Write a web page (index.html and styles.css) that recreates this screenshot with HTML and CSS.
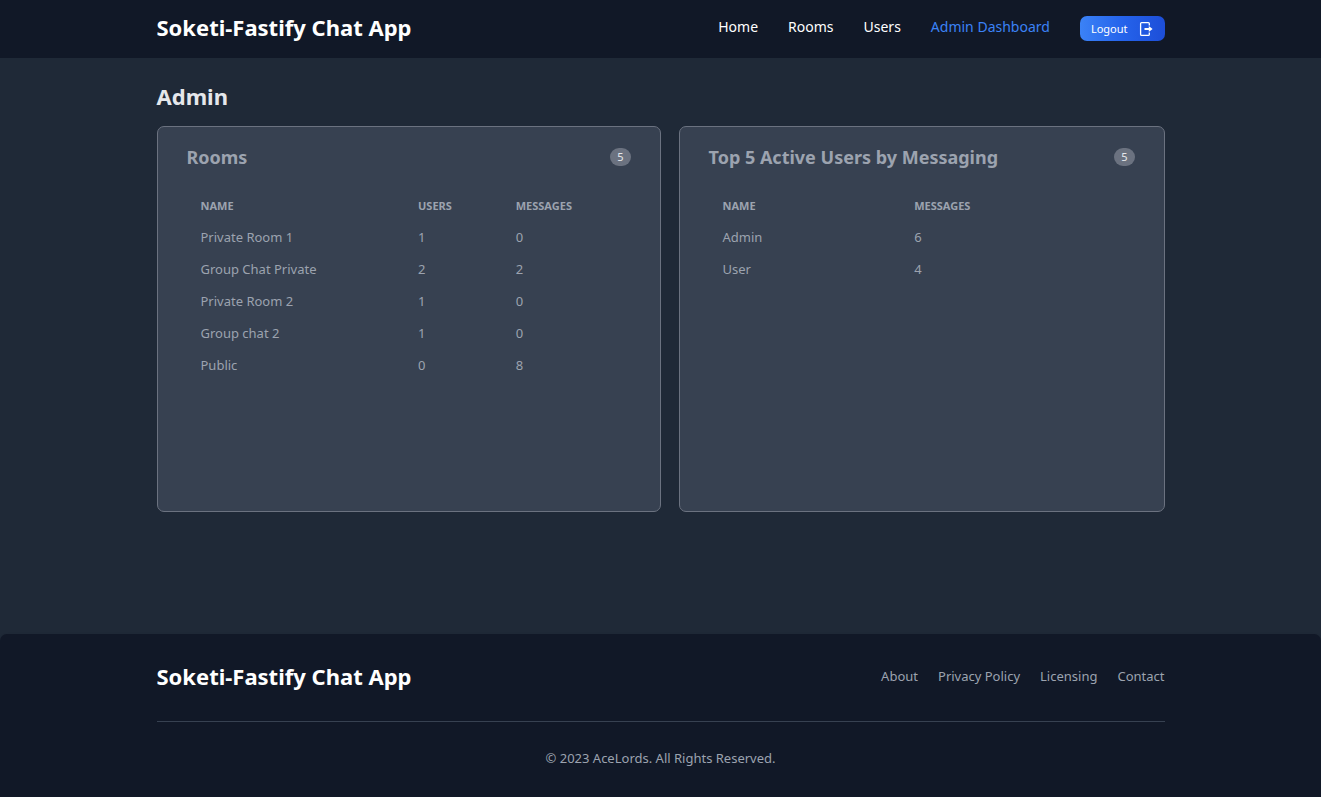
FILE: index.html
```html
<!DOCTYPE html>
<html lang="en">
<head>
<meta charset="utf-8">
<meta name="viewport" content="width=device-width, initial-scale=1">
<title>Soketi-Fastify Chat App</title>
<link rel="stylesheet" href="styles.css">
</head>
<body>
<div class="page">
  <header class="header">
    <div class="container header-row">
      <a class="brand" href="#">Soketi-Fastify Chat App</a>
      <nav>
        <ul class="nav">
          <li><a href="#">Home</a></li>
          <li><a href="#">Rooms</a></li>
          <li><a href="#">Users</a></li>
          <li><a class="active" href="#">Admin Dashboard</a></li>
          <li>
            <button class="logout" type="button">Logout
              <svg width="15" height="16" viewBox="0 0 15 16" fill="none" aria-hidden="true">
                <path d="M10.300 4.500V2.600Q10.300 1.600 9.300 1.600H2.600Q1.600 1.600 1.600 2.600V13.400Q1.600 14.400 2.600 14.400H9.300Q10.300 14.400 10.300 13.400V11.500" stroke="currentColor" stroke-width="1.300"/>
                <path d="M5.500 7H9.800V4.900L13.600 8L9.800 11.100V9H5.500Z" fill="currentColor"/>
              </svg>
            </button>
          </li>
        </ul>
      </nav>
    </div>
  </header>

  <main class="container main">
    <h1 class="title">Admin</h1>
    <div class="cards">
      <section class="card">
        <div class="card-head"><h2>Rooms</h2><span class="badge">5</span></div>
        <table class="table rooms">
          <thead><tr><th>Name</th><th>Users</th><th>Messages</th></tr></thead>
          <tbody>
            <tr><td>Private Room 1</td><td>1</td><td>0</td></tr>
            <tr><td>Group Chat Private</td><td>2</td><td>2</td></tr>
            <tr><td>Private Room 2</td><td>1</td><td>0</td></tr>
            <tr><td>Group chat 2</td><td>1</td><td>0</td></tr>
            <tr><td>Public</td><td>0</td><td>8</td></tr>
          </tbody>
        </table>
      </section>
      <section class="card">
        <div class="card-head"><h2>Top 5 Active Users by Messaging</h2><span class="badge">5</span></div>
        <table class="table users">
          <thead><tr><th>Name</th><th>Messages</th></tr></thead>
          <tbody>
            <tr><td>Admin</td><td>6</td></tr>
            <tr><td>User</td><td>4</td></tr>
          </tbody>
        </table>
      </section>
    </div>
  </main>

  <footer class="footer">
    <div class="container">
      <div class="footer-row">
        <a class="brand" href="#">Soketi-Fastify Chat App</a>
        <ul class="links">
          <li><a href="#">About</a></li>
          <li><a href="#">Privacy Policy</a></li>
          <li><a href="#">Licensing</a></li>
          <li><a href="#">Contact</a></li>
        </ul>
      </div>
      <hr class="rule">
      <p class="copyright">© 2023 AceLords. All Rights Reserved.</p>
    </div>
  </footer>
</div>
</body>
</html>
```

FILE: styles.css
```css
* {
  box-sizing: border-box;
}

body {
  margin: 0;
  background: #fff;
  font-family: "Noto Sans", sans-serif;
  font-size: 14px;
  line-height: 22px;
}

a {
  color: inherit;
  text-decoration: none;
}

ul {
  list-style: none;
  margin: 0;
  padding: 0;
}

.page {
  background: #1f2937;
}

.container {
  max-width: 1036px;
  margin: 0 auto;
  padding: 0 14px;
}

.header {
  background: #111827;
  color: #fff;
}

.header-row {
  display: flex;
  justify-content: space-between;
  align-items: flex-start;
  padding-top: 16px;
  padding-bottom: 17px;
}

.brand {
  color: #fff;
  font-size: 22px;
  font-weight: 700;
  line-height: 22px;
}

.nav {
  display: flex;
  gap: 30px;
}

.nav .active {
  color: #3b82f6;
}

.logout {
  display: flex;
  align-items: center;
  gap: 11px;
  padding: 4px 11px;
  border: 0;
  border-radius: 7px;
  background: linear-gradient(to right, #3b82f6, #2563eb, #1d4ed8);
  color: #fff;
  font: 11px/17px "Noto Sans", sans-serif;
}

.main {
  padding-top: 24px;
  padding-bottom: 122px;
}

.title {
  margin: 0 0 15px;
  color: #e5e7eb;
  font-size: 22px;
  font-weight: 700;
  line-height: 29px;
}

.cards {
  display: grid;
  grid-template-columns: 28fr 27fr;
  gap: 18px;
}

.card {
  min-height: 386px;
  padding: 14px 29px;
  border: 1px solid #6b7280;
  border-radius: 7px;
  background: #374151;
  color: #9ca3af;
}

.card-head {
  display: flex;
  justify-content: space-between;
  align-items: center;
  margin-bottom: 18px;
}

.card-head h2 {
  margin: 0;
  font-size: 18px;
  font-weight: 700;
  line-height: 32px;
}

.badge {
  padding: 0 7px;
  border-radius: 9px;
  background: #6b7280;
  color: #e5e7eb;
  font-size: 11px;
  line-height: 18px;
}

.table {
  width: 100%;
  table-layout: fixed;
  border-collapse: collapse;
  text-align: left;
}

.table th {
  padding: 6px 14px;
  font-size: 11px;
  font-weight: 700;
  line-height: 18px;
  text-transform: uppercase;
}

.table td {
  padding: 7px 14px;
  font-size: 13px;
  line-height: 18px;
}

.rooms th:first-child {
  width: 49%;
}

.rooms th:nth-child(2) {
  width: 22%;
}

.users th:first-child {
  width: 45%;
}

.footer {
  padding: 28px 0 30px;
  border-radius: 7px 7px 0 0;
  background: #111827;
  box-shadow: 0 1px 3px rgba(0, 0, 0, 0.1);
  color: #9ca3af;
  font-size: 13px;
}

.footer-row {
  display: flex;
  justify-content: space-between;
  align-items: center;
}

.footer .brand {
  line-height: 28px;
}

.links {
  display: flex;
  gap: 20px;
}

.rule {
  height: 1px;
  margin: 31px 0 27px;
  border: 0;
  background: #374151;
}

.copyright {
  margin: 0;
  line-height: 18px;
  text-align: center;
}
```
